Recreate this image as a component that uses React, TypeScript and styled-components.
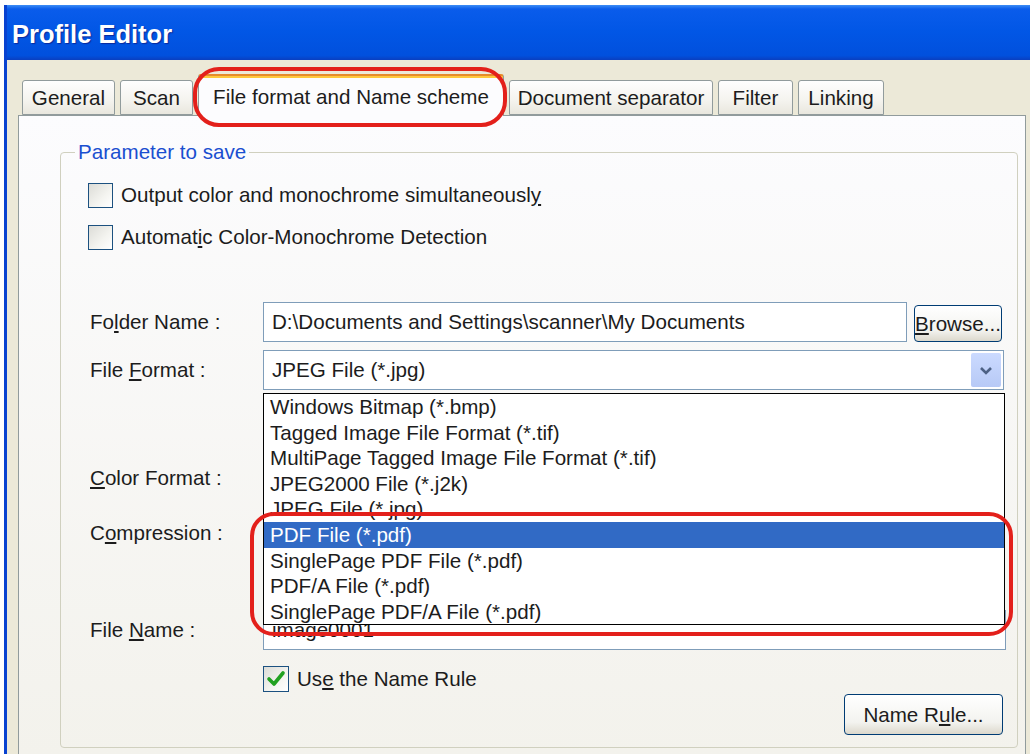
import styled, { createGlobalStyle } from "styled-components";
import { FC, ReactNode } from "react";

const GlobalStyle = createGlobalStyle`
  html, body {
    margin: 0;
    padding: 0;
    background: #fff;
    overflow: hidden;
  }
  body {
    font-family: "Liberation Sans", Arial, sans-serif;
    font-size: 20.6px;
    color: #1c1c1c;
  }
`;

const Window = styled.div`
  position: relative;
  margin: 5px 0 0 4px;
  width: 1023px;
  height: 749px;
  overflow: hidden;
  border-left: 3px solid #0842d0;
  background: #ece9d8;
`;

const TitleBar = styled.div`
  height: 55px;
  box-sizing: border-box;
  padding: 4px 0 0 5px;
  display: flex;
  align-items: center;
  background: linear-gradient(180deg, #3d8df5 0px, #0a5ceb 4px, #0257e6 45%, #0150dd 92%, #0a3fc0 100%);
  color: #fff;
  font-weight: bold;
  font-size: 25.5px;
  text-shadow: 1px 1px 1px #0a2a9c;
`;

const TabStrip = styled.div`
  display: flex;
  align-items: flex-end;
  gap: 5px;
  height: 55px;
  padding-left: 15px;
`;

const Tab = styled.div<{ $w: number; $active?: boolean }>`
  position: relative;
  z-index: ${(p) => (p.$active ? 2 : 0)};
  width: ${(p) => p.$w}px;
  height: ${(p) => (p.$active ? 42 : 35)}px;
  margin-bottom: ${(p) => (p.$active ? -1 : 0)}px;
  box-sizing: border-box;
  display: flex;
  align-items: center;
  justify-content: center;
  padding-top: ${(p) => (p.$active ? 2 : 1)}px;
  border: 1px solid #919b9c;
  border-bottom: ${(p) => (p.$active ? "none" : "1px solid #919b9c")};
  border-top: ${(p) => (p.$active ? "2px solid #e68b2c" : "1px solid #919b9c")};
  border-radius: 3px 3px 0 0;
  background: ${(p) =>
    p.$active
      ? "linear-gradient(180deg, #ffc83c 0, #ffc83c 2px, #fcfcfe 2px)"
      : "linear-gradient(180deg, #fefefe, #f4f3ee 60%, #e9e7de)"};
  white-space: nowrap;
`;

const Pane = styled.div`
  margin-left: 11px;
  width: 1008px;
  height: 640px;
  box-sizing: border-box;
  border: 1px solid #919b9c;
  background: linear-gradient(180deg, #fcfcfe, #f3f2ec);
  padding: 24px 0 0 41px;
`;

const Group = styled.fieldset`
  margin: 0;
  width: 958px;
  min-width: 0;
  box-sizing: border-box;
  border: 1px solid #d0d0bf;
  border-radius: 4px;
  padding: 0 12px 12px 14px;
`;

const Caption = styled.legend`
  padding: 0 3px;
  line-height: 24px;
  color: #1a4fd0;
`;

const GroupBody = styled.div`
  padding-left: 13px;
  display: flex;
  flex-direction: column;
`;

const CheckRow = styled.label<{ $mt: number; $indent?: number }>`
  display: flex;
  align-items: center;
  gap: 8px;
  margin-top: ${(p) => p.$mt}px;
  margin-left: ${(p) => p.$indent ?? 0}px;
  height: 26px;
`;

const Box = styled.span<{ $size: number }>`
  width: ${(p) => p.$size}px;
  height: ${(p) => p.$size}px;
  box-sizing: border-box;
  border: 1px solid #1c5180;
  background: linear-gradient(135deg, #dcdcd7, #f4f4f0 60%, #ffffff);
  display: flex;
  align-items: center;
  justify-content: center;
  flex: none;
`;

const FormRow = styled.div<{ $mt: number }>`
  display: grid;
  grid-template-columns: 175px 1fr;
  align-items: center;
  height: 40px;
  margin-top: ${(p) => p.$mt}px;
`;

const Label = styled.span`
  padding-left: 2px;
  white-space: nowrap;
`;

const FieldLine = styled.div`
  display: flex;
  align-items: flex-end;
  gap: 7px;
  height: 40px;
`;

const TextBox = styled.div<{ $w: number }>`
  width: ${(p) => p.$w}px;
  height: 40px;
  box-sizing: border-box;
  border: 1px solid #7f9db9;
  background: #fff;
  padding-left: 8px;
  display: flex;
  align-items: center;
  white-space: nowrap;
  overflow: hidden;
`;

const Button = styled.button<{ $w: number; $h: number }>`
  width: ${(p) => p.$w}px;
  height: ${(p) => p.$h}px;
  padding: 0;
  border: 1px solid #003c74;
  border-radius: 4px;
  background: linear-gradient(180deg, #ffffff, #f3f3ef 70%, #dcd8cc);
  font: inherit;
  color: #1c1c1c;
  white-space: nowrap;
`;

const Combo = styled.div<{ $w: number }>`
  position: relative;
  width: ${(p) => p.$w}px;
  height: 40px;
  box-sizing: border-box;
  border: 1px solid #7f9db9;
  background: #fff;
  padding-left: 8px;
  display: flex;
  align-items: center;
  white-space: nowrap;
`;

const ArrowBtn = styled.span`
  margin-left: auto;
  margin-right: 2px;
  width: 30px;
  height: 34px;
  border-radius: 2px;
  background: linear-gradient(180deg, #cbdaff, #b7c9f6);
  display: flex;
  align-items: center;
  justify-content: center;
`;

const DropList = styled.ul`
  position: absolute;
  z-index: 5;
  top: calc(100% + 4px);
  left: -1px;
  width: 742px;
  margin: 0;
  padding: 0;
  list-style: none;
  box-sizing: border-box;
  border: 1px solid #000;
  background: #fff;
`;

const Item = styled.li<{ $sel?: boolean }>`
  height: 25.6px;
  line-height: 25.6px;
  padding-left: 6px;
  background: ${(p) => (p.$sel ? "#316ac5" : "transparent")};
  color: ${(p) => (p.$sel ? "#fff" : "#1c1c1c")};
`;

const ButtonRow = styled.div`
  display: flex;
  justify-content: flex-end;
  margin-top: 2px;
  padding-right: 2px;
`;

const Mark = styled.div<{ $x: number; $y: number; $w: number; $h: number; $r: number }>`
  position: absolute;
  z-index: 10;
  left: ${(p) => p.$x}px;
  top: ${(p) => p.$y}px;
  width: ${(p) => p.$w}px;
  height: ${(p) => p.$h}px;
  box-sizing: border-box;
  border: 4px solid #e3201b;
  border-radius: ${(p) => p.$r}px;
  pointer-events: none;
`;

const CheckBox: FC<{ checked?: boolean; size: number }> = ({ checked, size }) => (
  <Box $size={size}>
    {checked && (
      <svg width={size - 6} height={size - 6} viewBox="0 0 20 20">
        <path d="M3 10 L8 15 L17 4" fill="none" stroke="#21a121" strokeWidth="3.6" strokeLinecap="round" strokeLinejoin="round" />
      </svg>
    )}
  </Box>
);

const Chevron = () => (
  <svg width="14" height="9" viewBox="0 0 14 9">
    <polyline points="2,2 7,7 12,2" fill="none" stroke="#4d6185" strokeWidth="2.6" />
  </svg>
);

const formats = [
  "Windows Bitmap (*.bmp)",
  "Tagged Image File Format (*.tif)",
  "MultiPage Tagged Image File Format (*.tif)",
  "JPEG2000 File (*.j2k)",
  "JPEG File (*.jpg)",
  "PDF File (*.pdf)",
  "SinglePage PDF File (*.pdf)",
  "PDF/A File (*.pdf)",
  "SinglePage PDF/A File (*.pdf)",
];

const tabs: { name: ReactNode; w: number; active?: boolean }[] = [
  { name: "General", w: 93 },
  { name: "Scan", w: 73 },
  { name: "File format and Name scheme", w: 306, active: true },
  { name: "Document separator", w: 204 },
  { name: "Filter", w: 75 },
  { name: "Linking", w: 86 },
];

export default function App() {
  return (
    <>
      <GlobalStyle />
      <Window>
        <TitleBar>Profile Editor</TitleBar>
        <TabStrip>
          {tabs.map((t, i) => (
            <Tab key={i} $w={t.w} $active={t.active}>
              {t.name}
            </Tab>
          ))}
        </TabStrip>
        <Pane>
          <Group>
            <Caption>Parameter to save</Caption>
            <GroupBody>
              <CheckRow $mt={18}>
                <CheckBox size={25} />
                <span>
                  Output color and monochrome simultaneousl<u>y</u>
                </span>
              </CheckRow>
              <CheckRow $mt={16}>
                <CheckBox size={25} />
                <span>
                  Automat<u>i</u>c Color-Monochrome Detection
                </span>
              </CheckRow>

              <FormRow $mt={52}>
                <Label>
                  Fo<u>l</u>der Name :
                </Label>
                <FieldLine>
                  <TextBox $w={644}>D:\Documents and Settings\scanner\My Documents</TextBox>
                  <Button $w={88} $h={37}>
                    <u>B</u>rowse...
                  </Button>
                </FieldLine>
              </FormRow>

              <FormRow $mt={8}>
                <Label>
                  File <u>F</u>ormat :
                </Label>
                <Combo $w={741}>
                  JPEG File (*.jpg)
                  <ArrowBtn>
                    <Chevron />
                  </ArrowBtn>
                  <DropList>
                    {formats.map((f, i) => (
                      <Item key={f} $sel={i === 5}>
                        {f}
                      </Item>
                    ))}
                  </DropList>
                </Combo>
              </FormRow>

              <FormRow $mt={68}>
                <Label>
                  <u>C</u>olor Format :
                </Label>
                <Combo $w={400}>
                  <ArrowBtn>
                    <Chevron />
                  </ArrowBtn>
                </Combo>
              </FormRow>

              <FormRow $mt={15}>
                <Label>
                  C<u>o</u>mpression :
                </Label>
                <Combo $w={400}>
                  <ArrowBtn>
                    <Chevron />
                  </ArrowBtn>
                </Combo>
              </FormRow>

              <FormRow $mt={57}>
                <Label>
                  File <u>N</u>ame :
                </Label>
                <TextBox $w={743}>image0001</TextBox>
              </FormRow>

              <CheckRow $mt={16} $indent={175}>
                <CheckBox size={26} checked />
                <span>
                  Us<u>e</u> the Name Rule
                </span>
              </CheckRow>

              <ButtonRow>
                <Button $w={159} $h={41}>
                  Name R<u>u</u>le...
                </Button>
              </ButtonRow>
            </GroupBody>
          </Group>
        </Pane>

        <Mark $x={186} $y={62} $w={314} $h={60} $r={26} />
        <Mark $x={243} $y={507} $w={763} $h={124} $r={24} />
      </Window>
    </>
  );
}
